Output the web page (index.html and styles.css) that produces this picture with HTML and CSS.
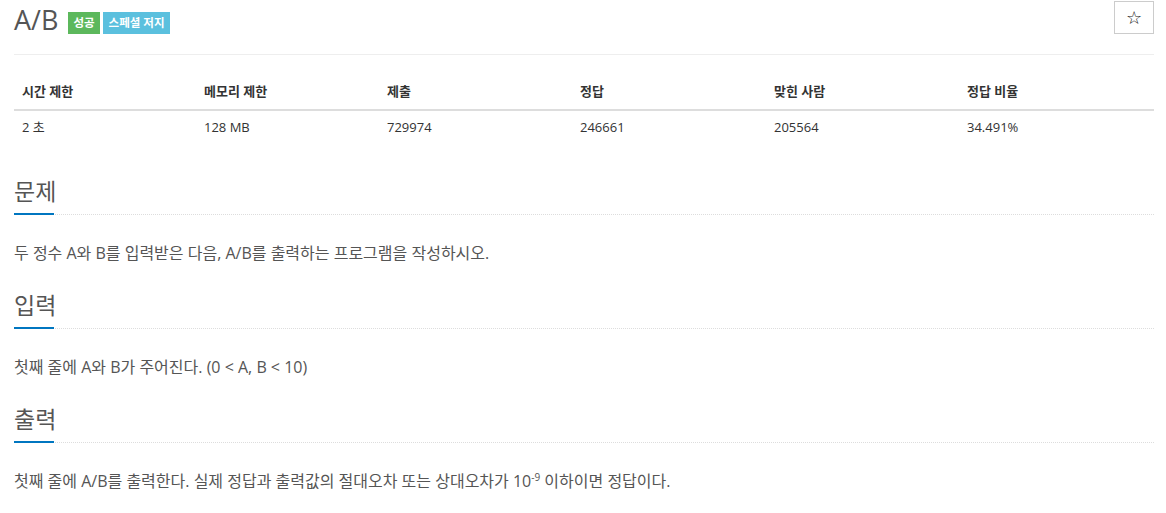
FILE: index.html
```html
<!DOCTYPE html>
<html lang="ko">
<head>
<meta charset="utf-8">
<title>A/B</title>
<link rel="stylesheet" href="styles.css">
</head>
<body>
<div class="container">
  <div class="page-header">
    <h1 class="title">A/B</h1>
    <span class="label label-success">성공</span>
    <span class="label label-info">스페셜 저지</span>
    <button class="star-btn" type="button">☆</button>
  </div>

  <table class="info-table">
    <thead>
      <tr>
        <th class="c1">시간 제한</th>
        <th class="c2">메모리 제한</th>
        <th class="c3">제출</th>
        <th class="c4">정답</th>
        <th class="c5">맞힌 사람</th>
        <th class="c6">정답 비율</th>
      </tr>
    </thead>
    <tbody>
      <tr>
        <td>2 초</td>
        <td>128 MB</td>
        <td>729974</td>
        <td>246661</td>
        <td>205564</td>
        <td>34.491%</td>
      </tr>
    </tbody>
  </table>

  <section class="problem-section first">
    <div class="headline"><h2>문제</h2></div>
    <p class="problem-text">두 정수 A와 B를 입력받은 다음, A/B를 출력하는 프로그램을 작성하시오.</p>
  </section>

  <section class="problem-section">
    <div class="headline"><h2>입력</h2></div>
    <p class="problem-text">첫째 줄에 A와 B가 주어진다. (0 &lt; A, B &lt; 10)</p>
  </section>

  <section class="problem-section">
    <div class="headline"><h2>출력</h2></div>
    <p class="problem-text">첫째 줄에 A/B를 출력한다. 실제 정답과 출력값의 절대오차 또는 상대오차가 10<sup>-9</sup> 이하이면 정답이다.</p>
  </section>
</div>
</body>
</html>
```

FILE: styles.css
```css
html, body {
  margin: 0;
  padding: 0;
  background: #fff;
}

body {
  font-family: "Open Sans", "Noto Sans CJK KR", sans-serif;
  color: #333;
  font-size: 13px;
}

.container {
  padding: 0 12px 0 14px;
}

.page-header {
  display: flex;
  align-items: flex-start;
  height: 54px;
  border-bottom: 1px solid #eee;
}

.title {
  margin: 5px 10px 0 0;
  font-size: 27px;
  line-height: 30px;
  font-weight: 400;
  color: #555;
}

.label {
  display: inline-block;
  margin-top: 12px;
  margin-right: 3px;
  padding: 4px 6px;
  font-size: 11.5px;
  line-height: 14px;
  font-weight: 700;
  color: #fff;
}

.label-success {
  background: #5cb85c;
  padding: 4px 5px;
}

.label-info {
  background: #5bc0de;
}

.star-btn {
  margin-left: auto;
  margin-top: 1px;
  width: 40px;
  height: 33px;
  padding: 0;
  border: 1px solid #ccc;
  background: #fff;
  font-size: 18px;
  color: #111;
  font-family: "DejaVu Sans", sans-serif;
  line-height: 1;
}

.info-table {
  width: 100%;
  margin-top: 18px;
  border-collapse: collapse;
  table-layout: fixed;
}

.info-table th {
  text-align: left;
  font-weight: 700;
  font-size: 13px;
  line-height: 20px;
  padding: 8px 8px;
  border-bottom: 2px solid #ddd;
}

.info-table td {
  font-size: 13px;
  line-height: 20px;
  padding: 6px 8px 8px;
}

.c1 { width: 166px; }
.c2 { width: 167px; }
.c3 { width: 177px; }
.c4 { width: 178px; }
.c5 { width: 177px; }
.c6 { width: auto; }

.problem-section {
  margin-top: 26px;
}

.problem-section.first {
  margin-top: 31px;
}

.headline {
  display: flex;
  border-bottom: 1px dotted #ddd;
}

.headline h2 {
  margin: 0 0 -1px;
  font-size: 23px;
  line-height: 30px;
  padding-bottom: 7px;
  font-weight: 400;
  color: #555;
  border-bottom: 2px solid #0076c0;
  width: 40px;
  white-space: nowrap;
}

.problem-text {
  margin: 27px 0 0;
  font-size: 16px;
  line-height: 22px;
  color: #555;
}

.problem-text sup {
  font-size: 10px;
  line-height: 0;
}
```
